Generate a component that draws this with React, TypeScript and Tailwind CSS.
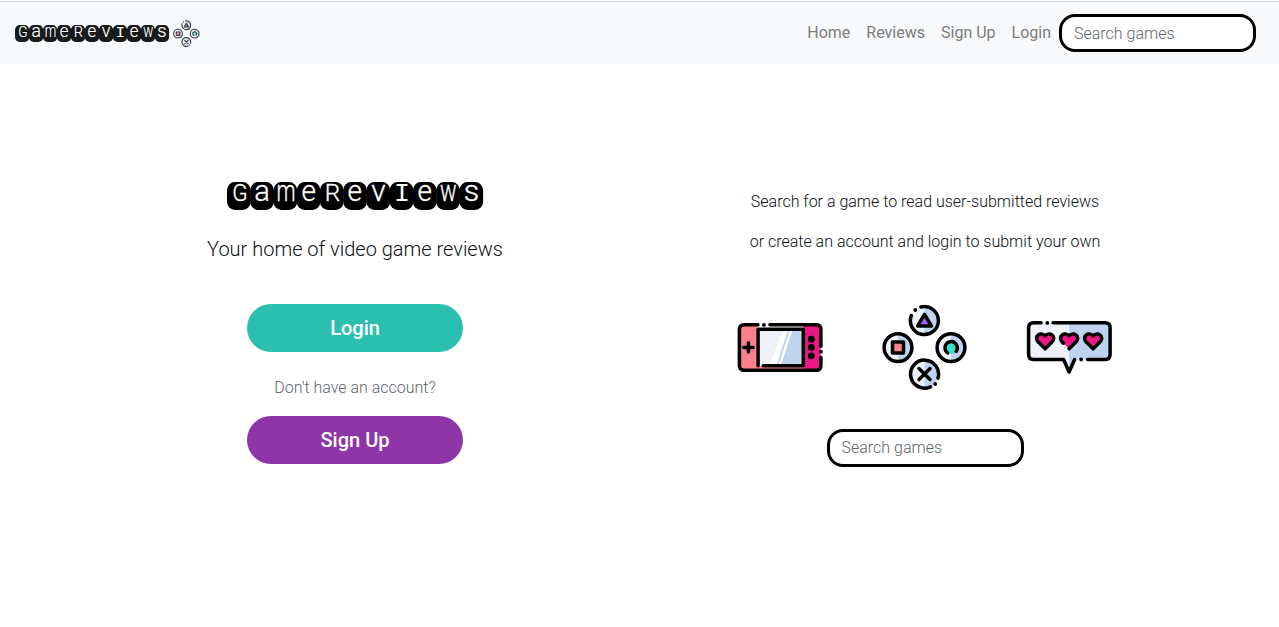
import React from "react";

type Glyph = { ch: string; x: number; w: number; size: number; font: string; weight: number };

const ROBOTO = "Roboto, sans-serif";
const MONO = "'Liberation Mono', monospace";

// x and w give the advance box of each glyph on its keycap.
const glyphs: Glyph[] = [
  { ch: "G", x: 5.2, w: 15.4, size: 22.5, font: ROBOTO, weight: 300 },
  { ch: "a", x: 27.2, w: 15.6, size: 29, font: ROBOTO, weight: 300 },
  { ch: "m", x: 49.5, w: 19, size: 29, font: ROBOTO, weight: 300 },
  { ch: "e", x: 74.4, w: 14.4, size: 29, font: ROBOTO, weight: 300 },
  { ch: "R", x: 97.5, w: 15.4, size: 22.5, font: ROBOTO, weight: 300 },
  { ch: "e", x: 120.4, w: 14.4, size: 29, font: ROBOTO, weight: 300 },
  { ch: "v", x: 144, w: 14.4, size: 29, font: ROBOTO, weight: 300 },
  { ch: "I", x: 166.6, w: 16, size: 24, font: MONO, weight: 400 },
  { ch: "e", x: 190.2, w: 14.4, size: 29, font: ROBOTO, weight: 300 },
  { ch: "w", x: 212.6, w: 16.6, size: 29, font: ROBOTO, weight: 300 },
  { ch: "s", x: 236.2, w: 15.4, size: 29, font: ROBOTO, weight: 300 },
];

function Wordmark({ className, tile }: { className: string; tile: string }) {
  return (
    <svg viewBox="0 0 255.5 27" preserveAspectRatio="none" className={className} role="img" aria-label="GameReviews">
      {glyphs.map((g, i) => (
        <rect key={i} x={i * 23.2} y="0" width="23.6" height="27" rx="8" fill={tile} />
      ))}
      {glyphs.map((g, i) => (
        <text
          key={i}
          x={g.x}
          y="18.3"
          textLength={g.w}
          lengthAdjust="spacingAndGlyphs"
          fontFamily={g.font}
          fontWeight={g.weight}
          fontSize={g.size}
          fill="#fff"
          stroke="#fff"
          strokeWidth={g.font === MONO ? 0 : 0.3}
        >
          {g.ch}
        </text>
      ))}
    </svg>
  );
}

function PadCircle({ cx, cy }: { cx: number; cy: number }) {
  return (
    <>
      <circle cx={cx} cy={cy} r="14" fill="#eff1f8" />
      <path d={`M${cx} ${cy - 14}a14 14 0 0 1 0 28z`} fill="#c0d3ee" />
    </>
  );
}

function ButtonsIcon({ className }: { className: string }) {
  return (
    <svg viewBox="0 -0.6 86 86" className={className} fill="none" stroke="#000" strokeWidth="3.5" strokeLinecap="round" strokeLinejoin="round">
      <g stroke="none">
        <PadCircle cx={42.5} cy={16} />
        <PadCircle cx={16} cy={43} />
        <PadCircle cx={69} cy={43} />
        <PadCircle cx={42.5} cy={69.5} />
      </g>
      <path d="M39 2.400A14 14 0 1 1 29.300 11" />
      <path d="M33.300 5.400v.1" strokeWidth="3.800" />
      <circle cx="16" cy="43" r="13.900" />
      <circle cx="69" cy="43" r="13.900" />
      <path d="M48.500 82.200A14 14 0 1 1 56 73.500" />
      <path d="M53.200 79.300v.1" strokeWidth="3.800" />
      <path d="M42.500 9.800 49.400 21.300H35.600z" fill="#a65ff0" />
      <rect x="10.500" y="37.500" width="11" height="11" fill="#ff808c" />
      <circle cx="69.500" cy="43.300" r="6.200" fill="#35e5cb" stroke="none" />
      <path d="M65.600 48.300A6.200 6.200 0 1 1 74.200 46.800" />
      <path d="m37 64 11 11m0-11-11 11" />
    </svg>
  );
}

function ConsoleIcon() {
  return (
    <svg viewBox="-0.4 -0.5 86 50" className="h-[50px] w-[86px] overflow-visible" fill="none" stroke="#000" strokeWidth="3.5" strokeLinecap="round" strokeLinejoin="round">
      <path d="M20 2H7q-5 0-5 5v36q0 5 5 5h13z" fill="#ff808c" stroke="none" />
      <path d="M20 43h46v5H20z" fill="#ff808c" stroke="none" />
      <path d="M66 2h13q4.500 0 4.500 5v36q0 5-4.500 5H66z" fill="#ec1685" stroke="none" />
      <path d="M20 6h46v37H20z" fill="#eff1f8" stroke="none" />
      <path d="M49 6h17v37H36z" fill="#c0d3ee" stroke="none" />
      <path d="M46 6h5L39 43h-6.500zM53 6h2.500L43.500 43h-2.500z" fill="#fff" stroke="none" />
      <path d="M84.500 24v11" stroke="#fff" strokeWidth="2.500" />
      <path d="M20.500 2.300H7q-5 0-5 5V43q0 4.800 5 4.800h72q4.500 0 4.500-4.800v-8.200M32.500 2.300H79q4.500 0 4.500 5v16.500" />
      <path d="M26.500 2.300v.1M83.600 29.200v.1" strokeWidth="3.800" />
      <path d="M20.700 43.200V6.700h45.200v36.500H25.900" />
      <path d="M11 20.200v9.400M6.300 24.900h9.400" />
      <g fill="#000" stroke="none">
        <circle cx="73.900" cy="16.700" r="3.400" />
        <circle cx="73.900" cy="25" r="3.400" />
        <circle cx="73.900" cy="33.300" r="3.400" />
      </g>
    </svg>
  );
}

const HEART = "M0 0-7.300-7.200C-11.500-12-4.700-18 0-12.900 4.700-18 11.500-12 7.300-7.200z";

function ReviewsIcon() {
  return (
    <svg viewBox="0.4 -0.5 86 54" className="h-[54px] w-[86px] overflow-visible" fill="none" stroke="#000" strokeWidth="3.5" strokeLinecap="round" strokeLinejoin="round">
      <path d="M43 2H7Q2 2 2 7v27q0 5 5 5h30l6 13z" fill="#eff1f8" stroke="none" />
      <path d="M42.500 2H78.500q5 0 5 5v27q0 5-5 5H48.500l-6 13z" fill="#c0d3ee" stroke="none" />
      <path d="M14.500 2.300H7Q2 2.300 2 7.300V34q0 5 5 5h30l5.500 12.500L48 39M26.500 2.300H78.500q5 0 5 5V34q0 5-5 5H61" />
      <path d="M20.700 2.300v.1M54.500 39v.1" strokeWidth="3.800" />
      <path d={HEART} transform="translate(18.5 28.3)" fill="#ec1685" />
      <path d={HEART} transform="translate(42.5 28.3)" fill="#ec1685" stroke="none" />
      <path d="M36.800 22.700 35.200 21.100C31 16.300 37.800 10.300 42.500 15.400 47.200 10.300 54 16.300 49.800 21.100L42.500 28.300" />
      <path d={HEART} transform="translate(66.5 28.3)" fill="#ec1685" />
    </svg>
  );
}

function SearchBox({ className }: { className: string }) {
  return (
    <input
      type="text"
      placeholder="Search games"
      className={`${className} h-[38px] w-[197px] rounded-[16px] border-[3px] border-black bg-white px-3 text-base font-light text-[#495057] outline-none placeholder:text-[#5c656d]`}
    />
  );
}

export default function App() {
  return (
    <div className="min-h-[627px] bg-white font-['Roboto',sans-serif] text-base font-light text-[#0c0f12]">
      <header className="flex h-16 items-center justify-between border-t border-[#f8f9fa] bg-[#f8f9fa] pr-[23px] pl-[15px] shadow-[inset_0_1px_0_#dadcdf]">
        <a href="#" className="flex items-center gap-1">
          <Wordmark className="mt-px h-[17px] w-[154px] overflow-visible" tile="#17191b" />
          <ButtonsIcon className="mt-px size-[27px] opacity-75" />
        </a>
        <nav className="flex items-center font-normal text-[#7c7d7d]">
          <a href="#" className="px-2">Home</a>
          <a href="#" className="px-2">Reviews</a>
          <a href="#" className="px-2">Sign Up</a>
          <a href="#" className="px-2">Login</a>
          <SearchBox className="pt-0.5" />
        </nav>
      </header>
      <main className="ml-[70px] grid w-[1140px] grid-cols-2 text-center">
        <section className="flex flex-col items-center pt-[118px]">
          <h1><Wordmark className="block h-[28px] w-[256px] overflow-visible" tile="#000" /></h1>
          <p className="mt-6 text-xl leading-[30px]">Your home of video game reviews</p>
          <button className="mt-10 h-12 w-[216px] rounded-full bg-[#2bbfb0] text-xl font-medium text-white">Login</button>
          <p className="mt-[25px] mb-[18px] leading-[21px] text-[#5c656d]">Don't have an account?</p>
          <button className="h-12 w-[216px] rounded-full bg-[#8e36a7] text-xl font-medium text-white">Sign Up</button>
        </section>
        <section className="flex flex-col items-center pt-[126px]">
          <p className="leading-6">Search for a game to read user-submitted reviews</p>
          <p className="mt-4 leading-6">or create an account and login to submit your own</p>
          <div className="mt-[50px] mb-[39px] flex h-[86px] items-center gap-[59px]">
            <ConsoleIcon />
            <ButtonsIcon className="size-[86px]" />
            <ReviewsIcon />
          </div>
          <SearchBox className="pb-0.5" />
        </section>
      </main>
    </div>
  );
}
